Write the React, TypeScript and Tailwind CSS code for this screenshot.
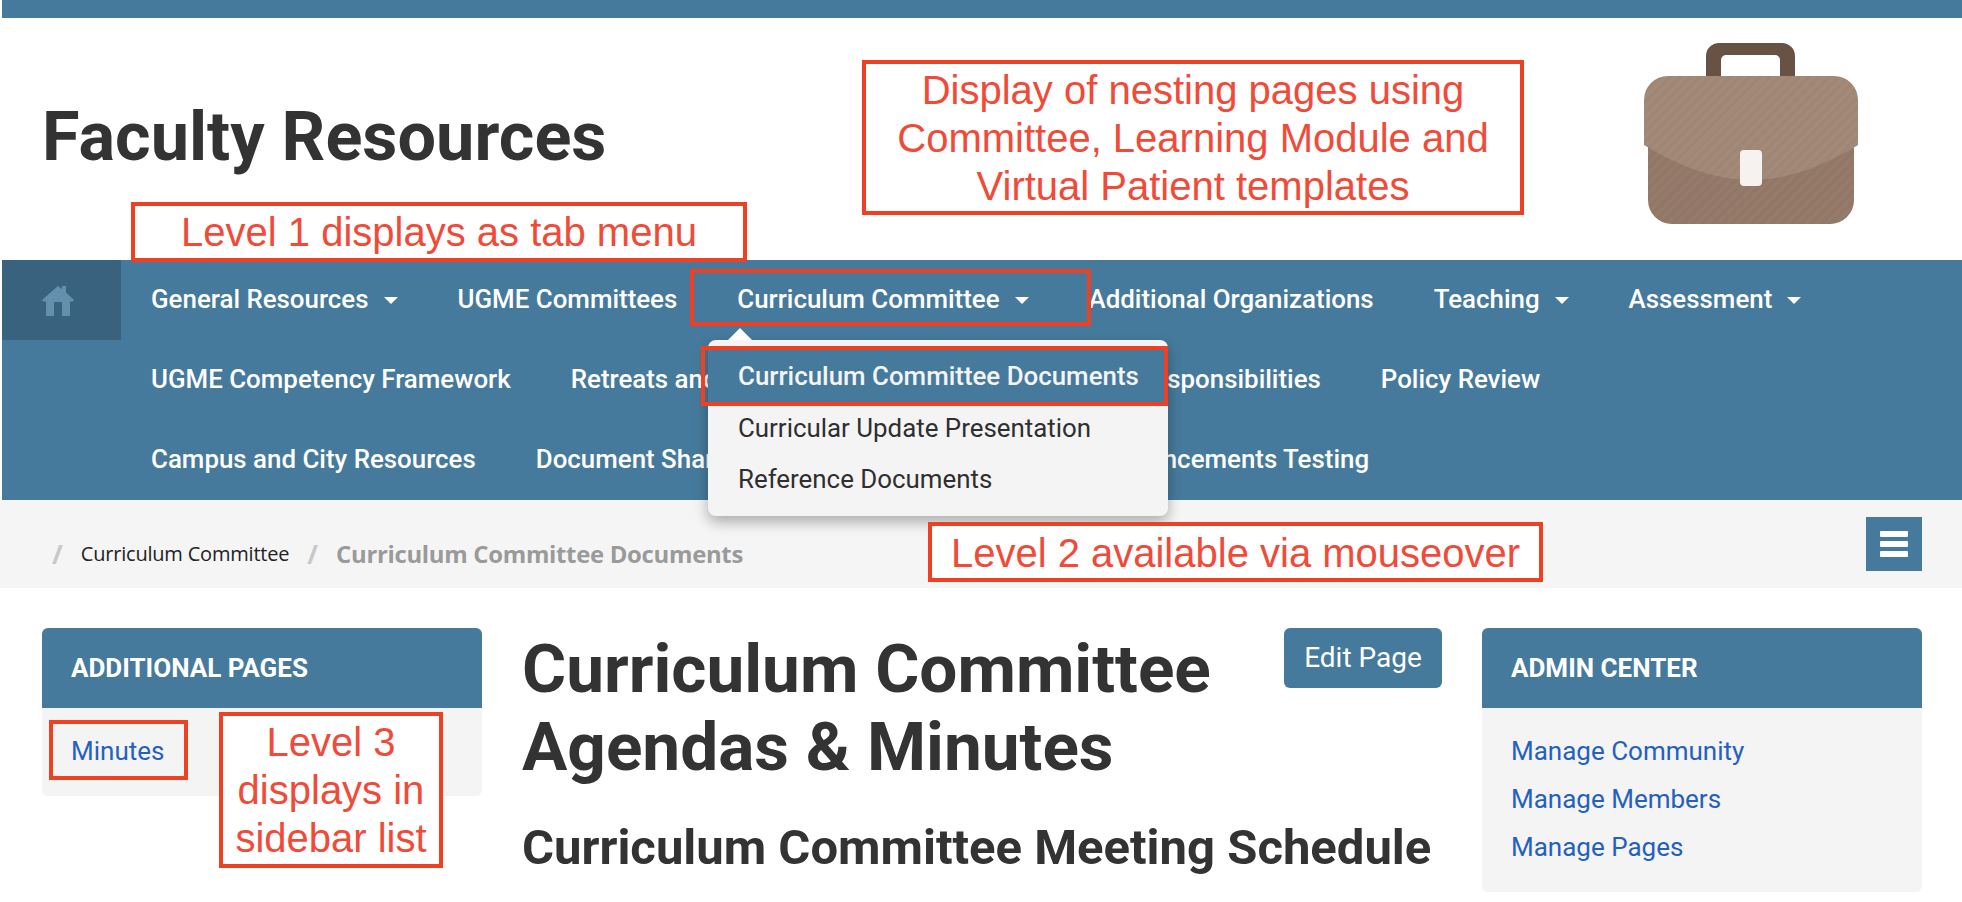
import React from "react";

const Caret = ({ cls }: { cls: string }) => (
  <span className={`inline-block w-0 h-0 border-x-[7px] border-x-transparent border-t-[7px] border-t-white ${cls}`} />
);

const NavItem = ({ label, caret, cls }: { label: string; caret?: boolean; cls?: string }) => (
  <li className={`h-20 pb-[2px] px-[30px] flex items-center text-white whitespace-nowrap ${cls ?? ""}`}>
    {label}
    {caret && <Caret cls="ml-[15px] mt-[3px]" />}
  </li>
);

const Note = ({ cls, children }: { cls: string; children: React.ReactNode }) => (
  <div
    className={`absolute bg-white border-[4px] border-[#ee4023] text-[#ef4b38] flex items-center justify-center text-center font-['Liberation_Sans',sans-serif] ${cls}`}
  >
    {children}
  </div>
);

const Briefcase = () => (
  <svg width="220" height="186" viewBox="0 0 220 186" className="shrink-0">
    <defs>
      <pattern id="st" width="7" height="7" patternUnits="userSpaceOnUse" patternTransform="rotate(45)">
        <rect width="7" height="7" fill="#ffffff" fillOpacity="0" />
        <rect width="3" height="7" fill="#ffffff" fillOpacity="0.03" />
      </pattern>
    </defs>
    <path d="M65 38 V16 a13 13 0 0 1 13 -13 h63 a13 13 0 0 1 13 13 V38 h-15 V20 a5 5 0 0 0 -5 -5 h-49 a5 5 0 0 0 -5 5 V38 Z" fill="#675244" />
    <path d="M7 100 H213 V160 a24 24 0 0 1 -24 24 H31 a24 24 0 0 1 -24 -24 Z" fill="#927766" />
    <path d="M3 60 a24 24 0 0 1 24 -24 H193 a24 24 0 0 1 24 24 V105 Q160 140 110 140 Q60 140 3 105 Z" fill="#a08675" />
    <path d="M7 100 H213 V160 a24 24 0 0 1 -24 24 H31 a24 24 0 0 1 -24 -24 Z M3 60 a24 24 0 0 1 24 -24 H193 a24 24 0 0 1 24 24 V105 H3 Z" fill="url(#st)" />
    <rect x="99" y="110" width="22" height="36" rx="4" fill="#f6f2f0" />
  </svg>
);

const Panel = ({ title, children, cls }: { title: string; children: React.ReactNode; cls: string }) => (
  <aside className={`w-[440px] shrink-0 rounded-md bg-[#f4f4f4] overflow-hidden ${cls}`}>
    <h3 className="h-20 bg-[#467a9c] pl-[29px] flex items-center text-white text-[26px] font-bold">{title}</h3>
    {children}
  </aside>
);

export default function App() {
  return (
    <div className="relative h-[902px] w-[1962px] overflow-hidden bg-white text-[#333333] font-['Roboto',sans-serif]">
      <div className="ml-[2px] h-[18px] bg-[#467a9c]" />

      <header className="h-[242px] flex items-start pl-[42px] pr-[101px]">
        <h1 className="mt-[83px] text-[68.4px] leading-[72px] font-bold">Faculty Resources</h1>
        <div className="ml-auto mt-[22px]">
          <Briefcase />
        </div>
      </header>

      <nav className="ml-[2px] h-60 bg-[#467a9c] flex items-start text-[25.88px] font-medium">
        <a className="w-[119px] h-20 bg-[#38627d] flex items-center justify-center shrink-0 pr-[7px] pt-[1px]">
          <svg width="32" height="30" viewBox="0 0 32 30" fill="#6590ad">
            <path d="M16 0 L20 3 V0 H24 V6.5 L32 14 L31 15.5 H28 V30 H20 V16 H12 V30 H4 V15.5 H1 L0 14 Z" />
          </svg>
        </a>
        <ul className="flex flex-wrap w-[1760px]">
          <NavItem label="General Resources" caret />
          <NavItem label="UGME Committees" />
          <NavItem label="Curriculum Committee" caret />
          <NavItem label="Additional Organizations" />
          <NavItem label="Teaching" caret />
          <NavItem label="Assessment" caret />
          <li className="basis-full h-0" />
          <NavItem label="UGME Competency Framework" />
          <NavItem label="Retreats and Events" />
          <NavItem label="Faculty Responsibilities" cls="ml-[186px]" />
          <NavItem label="Policy Review" />
          <li className="basis-full h-0" />
          <NavItem label="Campus and City Resources" />
          <NavItem label="Document Sharing" />
          <NavItem label="Announcements Testing" cls="ml-[278px]" />
        </ul>
      </nav>

      <div className="h-[88px] bg-[#f5f5f5] pl-[52px] pr-10 flex items-center">
        <span className="mt-[20px] flex items-center">
          <span className="text-[#c8c8c8] text-[26px] font-bold font-['Open_Sans',sans-serif]">/</span>
          <span className="ml-[18px] text-[20px] text-[#222222] font-['Open_Sans',sans-serif] tracking-[-0.2px]">Curriculum Committee</span>
          <span className="ml-[18px] text-[#c8c8c8] text-[26px] font-bold font-['Open_Sans',sans-serif]">/</span>
          <span className="ml-[18px] text-[23.9px] font-bold text-[#9a9a9a] font-['Open_Sans',sans-serif] tracking-[-0.3px]">Curriculum Committee Documents</span>
        </span>
        <button className="ml-auto w-14 h-[54px] bg-[#467a9c] flex items-center justify-center">
          <svg width="28" height="26" viewBox="0 0 28 26" fill="#ffffff">
            <rect y="0" width="28" height="6" rx="1" />
            <rect y="10" width="28" height="6" rx="1" />
            <rect y="20" width="28" height="6" rx="1" />
          </svg>
        </button>
      </div>

      <main className="flex pl-[42px] pr-10 pt-10 gap-10 items-start">
        <Panel title="ADDITIONAL PAGES" cls="h-[168px]">
          <div className="pl-[29px] pt-[30px] text-[26px] leading-[26px] text-[#2560bf]">Minutes</div>
        </Panel>

        <section className="w-[920px] shrink-0 relative">
          <button className="float-right w-[158px] h-[60px] rounded-md bg-[#467a9c] text-white text-[28px]">Edit Page</button>
          <h1 className="text-[67.5px] leading-[78px] font-bold w-[720px] mt-[2px]">Curriculum Committee Agendas &amp; Minutes</h1>
          <h2 className="mt-[32px] text-[49px] leading-[60px] font-bold whitespace-nowrap">Curriculum Committee Meeting Schedule</h2>
        </section>

        <Panel title="ADMIN CENTER" cls="h-[264px]">
          <ul className="pl-[29px] pt-[30px] flex flex-col gap-[22px] text-[26px] leading-[26px] text-[#2560bf]">
            <li>Manage Community</li>
            <li>Manage Members</li>
            <li>Manage Pages</li>
          </ul>
        </Panel>
      </main>

      {/* Dropdown menu open over the nav */}
      <div className="absolute left-[708px] top-[340px] w-[460px] h-[176px] rounded-lg bg-[#f4f4f4] shadow-[0_6px_14px_rgba(0,0,0,0.3)] pt-[6px] text-[25.88px] font-medium">
        <span className="absolute left-5 -top-[12px] w-0 h-0 border-x-[12px] border-x-transparent border-b-[12px] border-b-white" />
        <div className="h-[57px] pt-[5px] pb-[1px] bg-[#467a9c] pl-[30px] flex items-center text-[#f4f4f4] whitespace-nowrap">Curriculum Committee Documents</div>
        <div className="h-[50px] pl-[30px] flex items-center text-[#2f2f2f] font-normal">Curricular Update Presentation</div>
        <div className="h-[52px] pl-[30px] flex items-center text-[#2f2f2f] font-normal">Reference Documents</div>
      </div>

      {/* Annotation overlays */}
      <Note cls="left-[862px] top-[60px] w-[662px] h-[155px] text-[40px] leading-[48px]">
        <span>Display of nesting pages using<br />Committee, Learning Module and<br />Virtual Patient templates</span>
      </Note>
      <Note cls="left-[131px] top-[202px] w-[616px] h-[60px] text-[40px]">Level 1 displays as tab menu</Note>
      <div className="absolute left-[690px] top-[269px] w-[401px] h-[57px] border-[4px] border-[#ee4023]" />
      <div className="absolute left-[701px] top-[346px] w-[467px] h-[60px] border-[4px] border-[#ee4023]" />
      <Note cls="left-[928px] top-[522px] w-[615px] h-[60px] pt-[2px] text-[40px]">Level 2 available via mouseover</Note>
      <div className="absolute left-[49px] top-[720px] w-[139px] h-[60px] border-[4px] border-[#ee4023]" />
      <Note cls="left-[219px] top-[712px] w-[224px] h-[156px] text-[40px] leading-[48px]">
        <span>Level 3<br />displays in<br />sidebar list</span>
      </Note>
    </div>
  );
}
